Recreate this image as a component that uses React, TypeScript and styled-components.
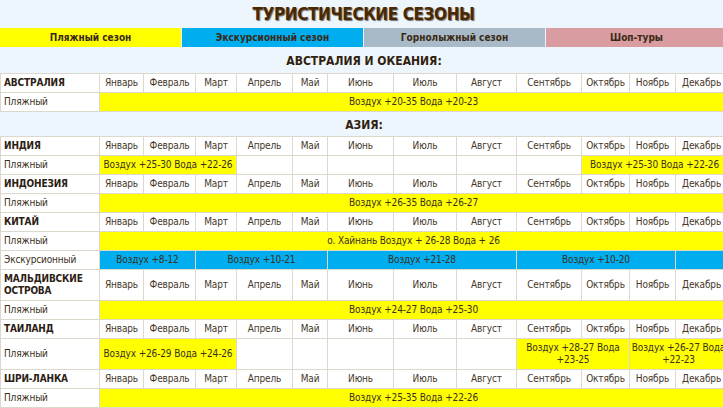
import React from "react";
import styled, { createGlobalStyle } from "styled-components";

const GlobalStyle = createGlobalStyle`
    html, body {
        margin: 0;
        padding: 0;
        background: #eef6fd;
        overflow: hidden;
    }
    body {
        font-family: "DejaVu Sans Condensed", "DejaVu Sans", Tahoma, sans-serif;
        color: #3b2f20;
    }
`;

const Page = styled.div`
    width: 727px;
`;

const Title = styled.h1`
    margin: 0;
    height: 28px;
    display: flex;
    align-items: center;
    justify-content: center;
    font-size: 17px;
    letter-spacing: -0.4px;
    font-weight: 700;
    color: #4a2800;
    text-shadow: 1px 1px 1px rgba(0, 0, 0, 0.55);
`;

const Legend = styled.div`
    display: flex;
    gap: 1px;
    height: 19px;
`;

type Season = "beach" | "excursion" | "ski" | "shop";

const seasonColor: Record<Season, string> = {
    beach: "#ffff00",
    excursion: "#00aeef",
    ski: "#a8b9c7",
    shop: "#d99ca0",
};

const LegendItem = styled.div<{ $season: Season }>`
    flex: 1;
    display: flex;
    align-items: center;
    justify-content: center;
    background: ${(p) => seasonColor[p.$season]};
    font-size: 10px;
    font-weight: 700;
    color: #3a2a15;
`;

const Table = styled.table`
    width: 727px;
    table-layout: fixed;
    border-collapse: collapse;
    font-size: 10px;
    letter-spacing: -0.15px;
    line-height: 12px;
`;

const SectionCell = styled.th<{ $height: number }>`
    box-sizing: border-box;
    height: ${(p) => p.$height}px;
    padding: 2px 0 0;
    border: none;
    border-bottom: 1px solid #dcd8cc;
    background: #eef6fd;
    font-size: 12px;
    font-weight: 700;
    letter-spacing: 0;
    line-height: 16px;
    color: #2f220f;
    text-align: center;
    vertical-align: middle;
`;

const Cell = styled.td<{ $season?: Season }>`
    padding: 3px 1px;
    border: 1px solid #dcd8cc;
    background: ${(p) => (p.$season ? seasonColor[p.$season] : "#ffffff")};
    text-align: center;
    vertical-align: middle;
    white-space: normal;
    overflow: hidden;
    color: #3b2f20;
`;

const LabelCell = styled(Cell)<{ $bold?: boolean }>`
    padding-left: 3px;
    text-align: left;
    font-weight: ${(p) => (p.$bold ? 700 : 400)};
    color: ${(p) => (p.$bold ? "#2b2013" : "#3b2f20")};
`;

const MonthCell = styled(Cell)`
    color: #45372a;
`;

const widths = [99, 44, 52, 41, 56, 35, 66, 63, 60, 65, 48, 46, 52];

const months = [
    "Январь",
    "Февраль",
    "Март",
    "Апрель",
    "Май",
    "Июнь",
    "Июль",
    "Август",
    "Сентябрь",
    "Октябрь",
    "Ноябрь",
    "Декабрь",
];

type Span = { span: number; season?: Season; text?: string };

type SeasonRow = { label: string; spans: Span[] };

type Country = { name: string; rows: SeasonRow[] };

type Region = { title: string; height: number; countries: Country[] };

const empty = (n: number): Span[] => Array.from({ length: n }, () => ({ span: 1 }));

const regions: Region[] = [
    {
        title: "АВСТРАЛИЯ И ОКЕАНИЯ:",
        height: 26,
        countries: [
            {
                name: "АВСТРАЛИЯ",
                rows: [
                    {
                        label: "Пляжный",
                        spans: [{ span: 12, season: "beach", text: "Воздух +20-35 Вода +20-23" }],
                    },
                ],
            },
        ],
    },
    {
        title: "АЗИЯ:",
        height: 25,
        countries: [
            {
                name: "ИНДИЯ",
                rows: [
                    {
                        label: "Пляжный",
                        spans: [
                            { span: 3, season: "beach", text: "Воздух +25-30 Вода +22-26" },
                            ...empty(6),
                            { span: 3, season: "beach", text: "Воздух +25-30 Вода +22-26" },
                        ],
                    },
                ],
            },
            {
                name: "ИНДОНЕЗИЯ",
                rows: [
                    {
                        label: "Пляжный",
                        spans: [{ span: 12, season: "beach", text: "Воздух +26-35 Вода +26-27" }],
                    },
                ],
            },
            {
                name: "КИТАЙ",
                rows: [
                    {
                        label: "Пляжный",
                        spans: [
                            {
                                span: 12,
                                season: "beach",
                                text: "о. Хайнань Воздух + 26-28 Вода + 26",
                            },
                        ],
                    },
                    {
                        label: "Экскурсионный",
                        spans: [
                            { span: 2, season: "excursion", text: "Воздух +8-12" },
                            { span: 3, season: "excursion", text: "Воздух +10-21" },
                            { span: 3, season: "excursion", text: "Воздух +21-28" },
                            { span: 3, season: "excursion", text: "Воздух +10-20" },
                            { span: 1, season: "excursion" },
                        ],
                    },
                ],
            },
            {
                name: "МАЛЬДИВСКИЕ ОСТРОВА",
                rows: [
                    {
                        label: "Пляжный",
                        spans: [{ span: 12, season: "beach", text: "Воздух +24-27 Вода +25-30" }],
                    },
                ],
            },
            {
                name: "ТАИЛАНД",
                rows: [
                    {
                        label: "Пляжный",
                        spans: [
                            { span: 3, season: "beach", text: "Воздух +26-29 Вода +24-26" },
                            ...empty(5),
                            { span: 2, season: "beach", text: "Воздух +28-27 Вода +23-25" },
                            { span: 2, season: "beach", text: "Воздух +26-27 Вода +22-23" },
                        ],
                    },
                ],
            },
            {
                name: "ШРИ-ЛАНКА",
                rows: [
                    {
                        label: "Пляжный",
                        spans: [{ span: 12, season: "beach", text: "Воздух +25-35 Вода +22-26" }],
                    },
                ],
            },
        ],
    },
];

export default function App() {
    return (
        <Page>
            <GlobalStyle />
            <Title>ТУРИСТИЧЕСКИЕ СЕЗОНЫ</Title>
            <Legend>
                <LegendItem $season="beach">Пляжный сезон</LegendItem>
                <LegendItem $season="excursion">Экскурсионный сезон</LegendItem>
                <LegendItem $season="ski">Горнолыжный сезон</LegendItem>
                <LegendItem $season="shop">Шоп-туры</LegendItem>
            </Legend>
            <Table>
                <colgroup>
                    {widths.map((w, i) => (
                        <col key={i} style={{ width: w }} />
                    ))}
                </colgroup>
                <tbody>
                    {regions.map((region) => (
                        <React.Fragment key={region.title}>
                            <tr>
                                <SectionCell colSpan={13} $height={region.height}>
                                    {region.title}
                                </SectionCell>
                            </tr>
                            {region.countries.map((country) => (
                                <React.Fragment key={country.name}>
                                    <tr>
                                        <LabelCell $bold>{country.name}</LabelCell>
                                        {months.map((m) => (
                                            <MonthCell key={m}>{m}</MonthCell>
                                        ))}
                                    </tr>
                                    {country.rows.map((row) => (
                                        <tr key={row.label}>
                                            <LabelCell>{row.label}</LabelCell>
                                            {row.spans.map((s, i) => (
                                                <Cell key={i} colSpan={s.span} $season={s.season}>
                                                    {s.text}
                                                </Cell>
                                            ))}
                                        </tr>
                                    ))}
                                </React.Fragment>
                            ))}
                        </React.Fragment>
                    ))}
                </tbody>
            </Table>
        </Page>
    );
}
